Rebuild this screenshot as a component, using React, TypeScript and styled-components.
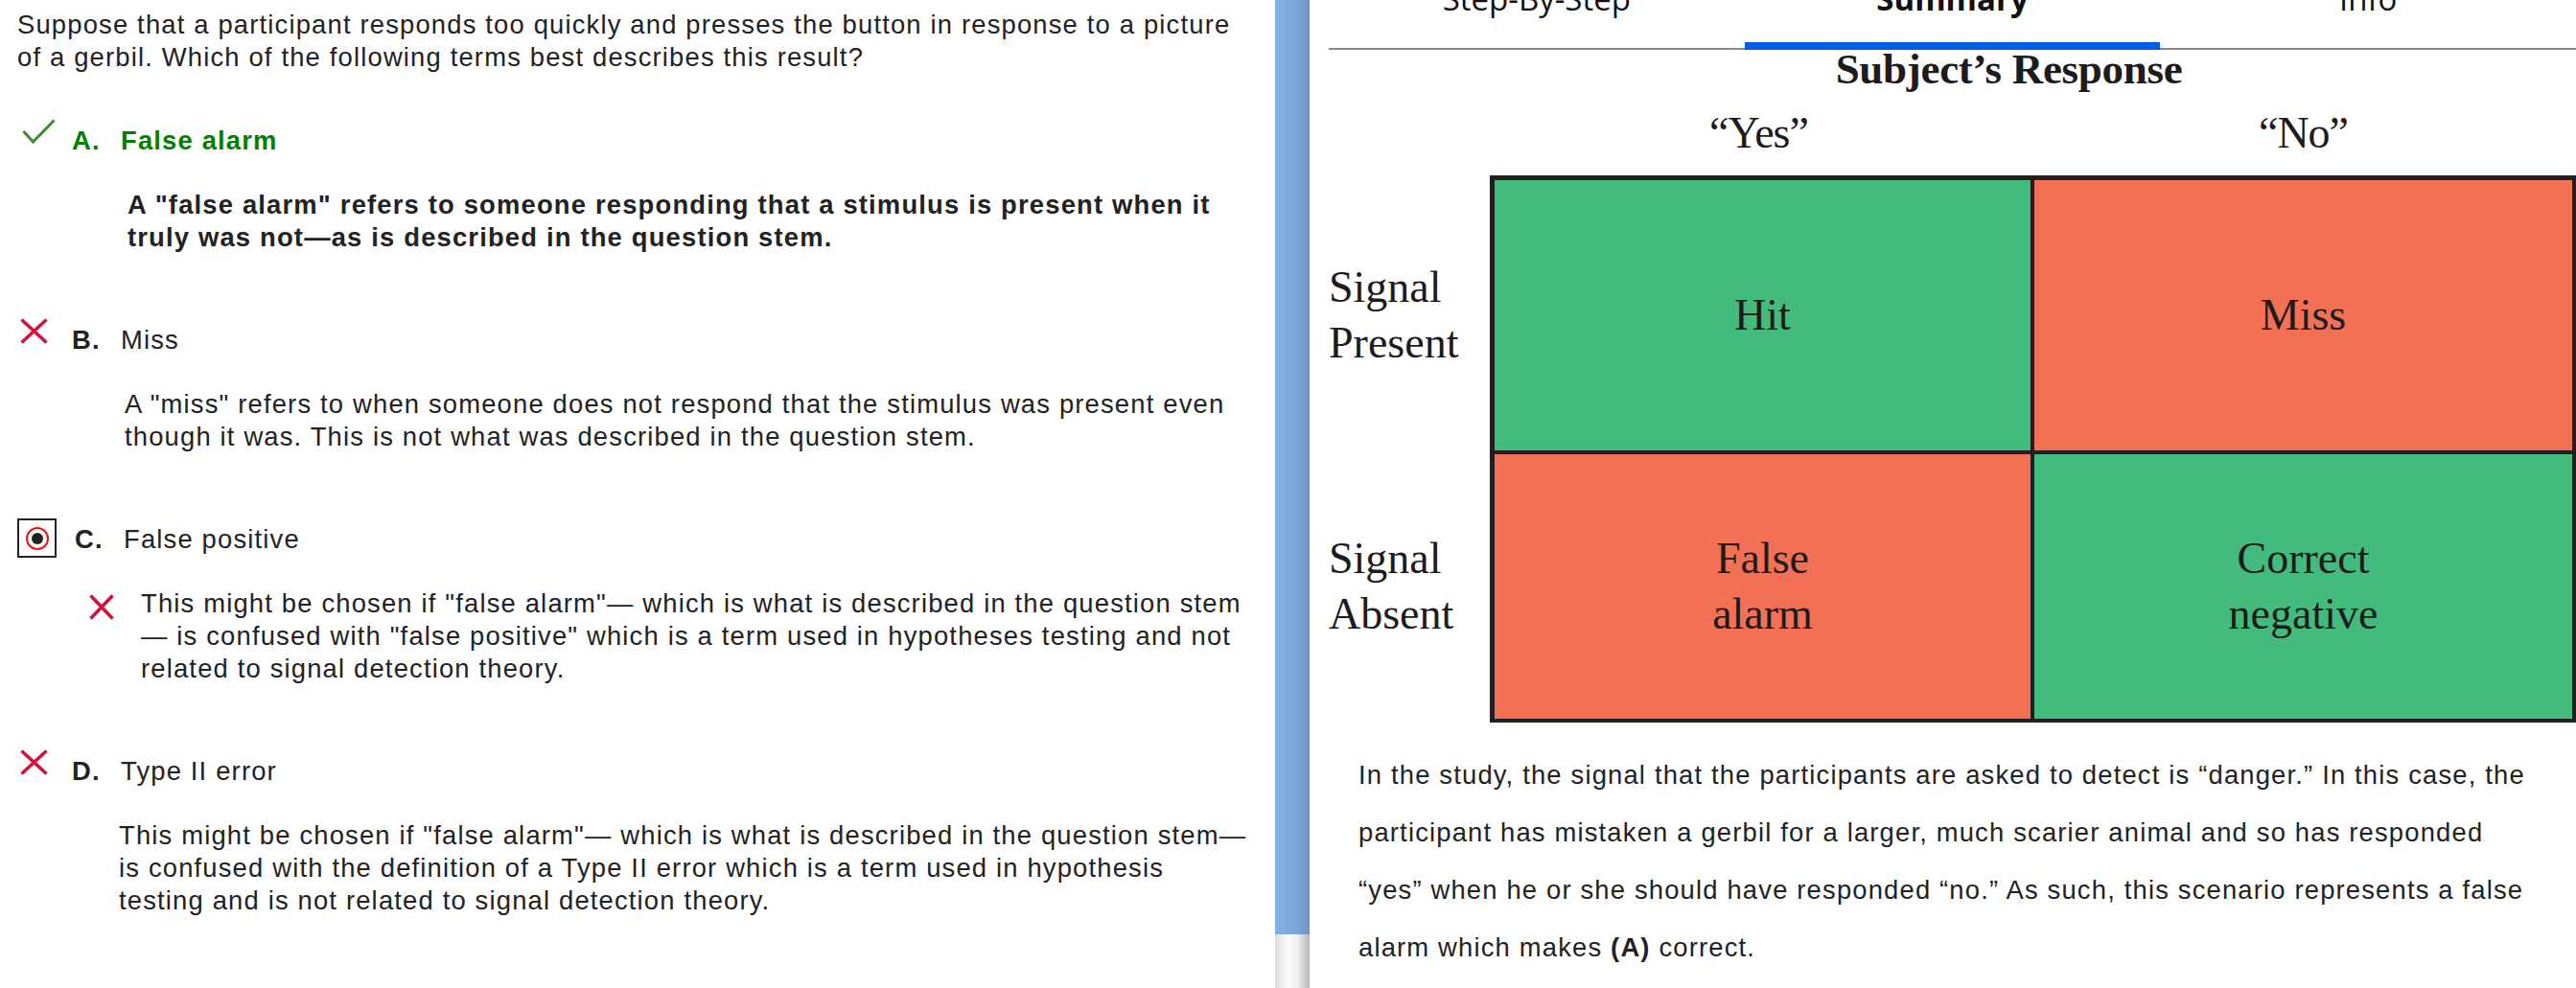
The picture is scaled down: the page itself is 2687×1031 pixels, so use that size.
import React, { ReactElement } from "react";
import styled, { createGlobalStyle } from "styled-components";

const GlobalStyle = createGlobalStyle`
  html,
  body {
    margin: 0;
    padding: 0;
    background: #fff;
  }
  body {
    overflow: hidden;
  }
`;

const Page = styled.div`
  display: flex;
  width: 2687px;
  height: 1031px;
  overflow: hidden;
`;

const LeftPane = styled.section`
  width: 1330px;
  flex-shrink: 0;
  box-sizing: border-box;
  padding: 9px 20px 0 18px;
  overflow: hidden;
  font-family: "Liberation Sans", Arial, sans-serif;
  font-size: 27.4px;
  letter-spacing: 1.17px;
  line-height: 34px;
  color: #222;
  white-space: nowrap;
`;

const Question = styled.p`
  margin: 0 0 53px;
`;

const OptionBlock = styled.div`
  & + & {
    margin-top: 73px;
  }
`;

const OptionRow = styled.div<{ correct?: boolean }>`
  display: flex;
  align-items: flex-start;
  color: ${props => (props.correct ? "#008000" : "#222")};
  font-weight: ${props => (props.correct ? "bold" : "normal")};
`;

const MarkerSlot = styled.div<{ boxed?: boolean }>`
  width: ${props => (props.boxed ? "60px" : "57px")};
  flex-shrink: 0;
  display: flex;
`;

const Letter = styled.span`
  width: 51px;
  flex-shrink: 0;
  font-weight: bold;
`;

const IconWrap = styled.span<{ left: number }>`
  display: block;
  margin-top: -6px;
  margin-left: ${props => props.left}px;
  line-height: 0;
`;

const RadioBox = styled.span`
  display: flex;
  align-items: center;
  justify-content: center;
  width: 37px;
  height: 37px;
  border: 2px solid #222;
  margin-top: -5px;
  margin-bottom: -2.5px;
`;

const RadioRing = styled.span`
  display: flex;
  align-items: center;
  justify-content: center;
  width: 20px;
  height: 20px;
  border: 2px solid #ee1111;
  border-radius: 50%;
`;

const RadioDot = styled.span`
  width: 12px;
  height: 12px;
  border-radius: 50%;
  background: #222;
`;

const Explanation = styled.div<{ indent: number; bold?: boolean }>`
  display: flex;
  align-items: flex-start;
  margin-top: 33px;
  padding-left: ${props => props.indent}px;
  font-weight: ${props => (props.bold ? "bold" : "normal")};
`;

const ExplanationIcon = styled.span`
  display: block;
  flex-shrink: 0;
  margin-top: 7px;
  margin-right: 28px;
  line-height: 0;
`;

const Scrollbar = styled.div`
  width: 36px;
  flex-shrink: 0;
  display: flex;
  flex-direction: column;
`;

const Thumb = styled.div`
  height: 975px;
  background: linear-gradient(to right, #83afe1 0%, #7eaadb 55%, #6f94c4 100%);
`;

const Track = styled.div`
  flex: 1;
  background: linear-gradient(to right, #dadada 0%, #fbfbfb 35%, #f1f1f1 65%, #b3b3b3 100%);
`;

const RightPane = styled.section`
  flex: 1;
  min-width: 0;
  box-sizing: border-box;
  padding-left: 20px;
  display: flex;
  flex-direction: column;
`;

const TabBar = styled.nav`
  display: flex;
  margin-top: -18px;
  box-shadow: inset 0 -2px 0 #7f8c8d;
`;

const Tab = styled.div<{ active?: boolean }>`
  flex: 1;
  height: 70px;
  display: flex;
  flex-direction: column;
  align-items: center;
  justify-content: space-between;
  font-family: "Open Sans", "Noto Sans", sans-serif;
  font-size: 33px;
  line-height: 33px;
  font-weight: ${props => (props.active ? 700 : 400)};
  color: #111;
`;

const TabIndicator = styled.span<{ active?: boolean }>`
  align-self: stretch;
  height: 8px;
  background: ${props => (props.active ? "#005fe6" : "transparent")};
`;

const Figure = styled.div`
  font-family: "Liberation Serif", "Times New Roman", serif;
  color: #1d1b1c;
`;

const FigureTitle = styled.h2`
  margin: 1px 0 0 168px;
  padding-right: 50px;
  text-align: center;
  font-size: 45px;
  line-height: 38px;
  font-weight: bold;
  letter-spacing: -0.3px;
`;

const ColumnHeads = styled.div`
  display: grid;
  grid-template-columns: 559px 561px;
  column-gap: 4px;
  margin: 25px 0 0 173px;
  font-size: 46px;
  line-height: 46px;
  text-align: center;
  letter-spacing: -1px;
`;

const ColumnHead = styled.span<{ shift?: number }>`
  padding-right: ${props => props.shift ?? 0}px;
`;

const Matrix = styled.div`
  display: flex;
  margin-top: 21px;
`;

const RowLabels = styled.div`
  width: 168px;
  flex-shrink: 0;
  display: flex;
  flex-direction: column;
  gap: 4px;
  padding-top: 5px;
`;

const RowLabel = styled.div<{ h: number }>`
  height: ${props => props.h}px;
  display: flex;
  align-items: center;
  font-size: 46px;
  line-height: 58px;
`;

const Grid = styled.div`
  display: grid;
  grid-template-columns: 559px 561px;
  grid-template-rows: 282px 276px;
  gap: 4px;
  background: #231f20;
  border: 5px solid #231f20;
  border-right-width: 4px;
  border-bottom-width: 4px;
`;

const Cell = styled.div<{ tone: "good" | "bad" }>`
  display: flex;
  align-items: center;
  justify-content: center;
  text-align: center;
  background: ${props => (props.tone === "good" ? "#43bb7c" : "#f27155")};
  font-size: 46px;
  line-height: 58px;
`;

const Summary = styled.p`
  margin: 25px 0 0;
  padding: 0 0 0 31px;
  font-family: "Liberation Sans", Arial, sans-serif;
  font-size: 27.4px;
  letter-spacing: 1.17px;
  line-height: 60px;
  color: #222;
  white-space: nowrap;
`;

const CheckIcon = (): ReactElement => (
  <svg width="35" height="26" viewBox="0 0 35 26">
    <polyline points="1.5,13 11.5,24 33.5,1.5" fill="none" stroke="#3f8c30" strokeWidth="3" />
  </svg>
);

const CrossIcon = ({ w, h }: { w: number; h: number }): ReactElement => (
  <svg width={w} height={h} viewBox={`0 0 ${w} ${h}`}>
    <path
      d={`M1.5 1.5 L${w - 1.5} ${h - 1.5} M${w - 1.5} 1.5 L1.5 ${h - 1.5}`}
      stroke="#d5103e"
      strokeWidth="3.6"
      fill="none"
    />
  </svg>
);

const App = (): ReactElement => {
  return (
    <Page>
      <GlobalStyle />
      <LeftPane>
        <Question>
          Suppose that a participant responds too quickly and presses the button in response to a picture
          <br />
          of a gerbil. Which of the following terms best describes this result?
        </Question>

        <OptionBlock>
          <OptionRow correct>
            <MarkerSlot>
              <IconWrap left={5}>
                <CheckIcon />
              </IconWrap>
            </MarkerSlot>
            <Letter>A.</Letter>
            <span>False alarm</span>
          </OptionRow>
          <Explanation indent={115} bold>
            <div>
              A "false alarm" refers to someone responding that a stimulus is present when it
              <br />
              truly was not—as is described in the question stem.
            </div>
          </Explanation>
        </OptionBlock>

        <OptionBlock>
          <OptionRow>
            <MarkerSlot>
              <IconWrap left={3}>
                <CrossIcon w={29} h={27} />
              </IconWrap>
            </MarkerSlot>
            <Letter>B.</Letter>
            <span>Miss</span>
          </OptionRow>
          <Explanation indent={112}>
            <div>
              A "miss" refers to when someone does not respond that the stimulus was present even
              <br />
              though it was. This is not what was described in the question stem.
            </div>
          </Explanation>
        </OptionBlock>

        <OptionBlock>
          <OptionRow>
            <MarkerSlot boxed>
              <RadioBox>
                <RadioRing>
                  <RadioDot />
                </RadioRing>
              </RadioBox>
            </MarkerSlot>
            <Letter>C.</Letter>
            <span>False positive</span>
          </OptionRow>
          <Explanation indent={75}>
            <ExplanationIcon>
              <CrossIcon w={26} h={27} />
            </ExplanationIcon>
            <div>
              This might be chosen if "false alarm"— which is what is described in the question stem
              <br />
              — is confused with "false positive" which is a term used in hypotheses testing and not
              <br />
              related to signal detection theory.
            </div>
          </Explanation>
        </OptionBlock>

        <OptionBlock>
          <OptionRow>
            <MarkerSlot>
              <IconWrap left={3}>
                <CrossIcon w={29} h={27} />
              </IconWrap>
            </MarkerSlot>
            <Letter>D.</Letter>
            <span>Type II error</span>
          </OptionRow>
          <Explanation indent={106}>
            <div>
              This might be chosen if "false alarm"— which is what is described in the question stem—
              <br />
              is confused with the definition of a Type II error which is a term used in hypothesis
              <br />
              testing and is not related to signal detection theory.
            </div>
          </Explanation>
        </OptionBlock>
      </LeftPane>

      <Scrollbar>
        <Thumb />
        <Track />
      </Scrollbar>

      <RightPane>
        <TabBar>
          <Tab>
            <span>Step-By-Step</span>
            <TabIndicator />
          </Tab>
          <Tab active>
            <span>Summary</span>
            <TabIndicator active />
          </Tab>
          <Tab>
            <span>Info</span>
            <TabIndicator />
          </Tab>
        </TabBar>

        <Figure>
          <FigureTitle>Subject’s Response</FigureTitle>
          <ColumnHeads>
            <ColumnHead shift={8}>“Yes”</ColumnHead>
            <ColumnHead>“No”</ColumnHead>
          </ColumnHeads>
          <Matrix>
            <RowLabels>
              <RowLabel h={282}>
                Signal
                <br />
                Present
              </RowLabel>
              <RowLabel h={276}>
                Signal
                <br />
                Absent
              </RowLabel>
            </RowLabels>
            <Grid>
              <Cell tone="good">Hit</Cell>
              <Cell tone="bad">Miss</Cell>
              <Cell tone="bad">
                False
                <br />
                alarm
              </Cell>
              <Cell tone="good">
                Correct
                <br />
                negative
              </Cell>
            </Grid>
          </Matrix>
        </Figure>

        <Summary>
          In the study, the signal that the participants are asked to detect is “danger.” In this case, the
          <br />
          participant has mistaken a gerbil for a larger, much scarier animal and so has responded
          <br />
          “yes” when he or she should have responded “no.” As such, this scenario represents a false
          <br />
          alarm which makes <b>(A)</b> correct.
        </Summary>
      </RightPane>
    </Page>
  );
};

export default App;
